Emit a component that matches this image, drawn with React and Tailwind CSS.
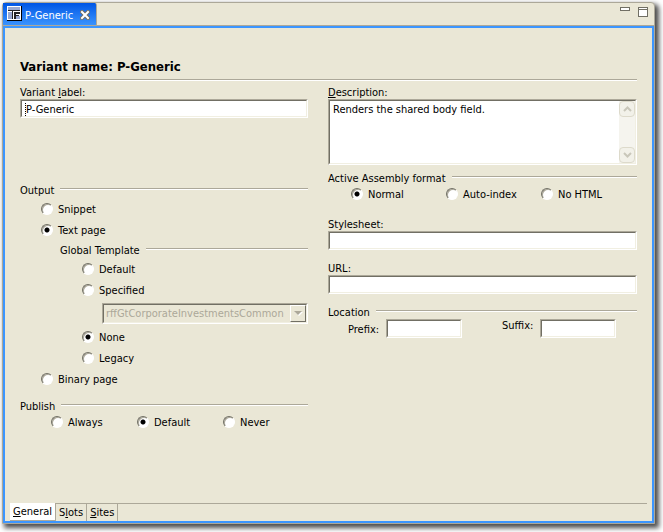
import React from "react";

const sunken =
  "border border-t-[#aca899] border-l-[#aca899] border-r-white border-b-white";
const sunkenInner =
  "border border-t-[#716f64] border-l-[#716f64] border-r-[#f1efe2] border-b-[#f1efe2]";

function Rule() {
  return <div className="h-[2px] flex-1 border-t border-b border-t-[#aca899] border-b-white" />;
}

function SectionHeader({ children }) {
  return (
    <div className="flex h-4 items-center gap-[6px]">
      <span className="pt-1">{children}</span>
      <Rule />
    </div>
  );
}

function Radio({ name, label, checked = false, className = "" }) {
  return (
    <label className={`flex items-center gap-[5px] ${className}`}>
      <input
        type="radio"
        name={name}
        defaultChecked={checked}
        className="size-3 shrink-0 appearance-none rounded-full border border-t-[#716f64] border-r-white border-b-white border-l-[#716f64] bg-white shadow-[inset_1px_1px_0_#aca899] checked:bg-[radial-gradient(circle,#000_0_2px,#fff_3px)]"
      />
      <span className="pt-[2px]">{label}</span>
    </label>
  );
}

function FieldLabel({ htmlFor, children, className = "" }) {
  return (
    <label htmlFor={htmlFor} className={`h-[15px] pt-[2px] leading-[14px] ${className}`}>
      {children}
    </label>
  );
}

function TextField({ id, defaultValue, className = "", children }) {
  return (
    <div className={`relative h-[19px] bg-white ${sunken} ${className}`}>
      <input
        id={id}
        type="text"
        defaultValue={defaultValue}
        className={`block h-full w-full bg-transparent px-1 pt-px outline-none ${sunkenInner}`}
      />
      {children}
    </div>
  );
}

function ScrollButton({ up = false }) {
  return (
    <button
      type="button"
      aria-label={up ? "Scroll up" : "Scroll down"}
      className="flex size-4 items-center justify-center rounded-sm border border-[#dddacb] bg-[#f2f1e9]"
    >
      <svg width="9" height="6" viewBox="0 0 9 6" fill="none" stroke="#c9c7ba" strokeWidth="2">
        <path d={up ? "M1 5 4.500 1.500 8 5" : "M1 1 4.500 4.500 8 1"} />
      </svg>
    </button>
  );
}

function LeftColumn() {
  return (
    <div className="flex min-w-0 flex-col">
      <FieldLabel htmlFor="variant-label">
        Variant <u>l</u>abel:
      </FieldLabel>
      <TextField id="variant-label" defaultValue="P-Generic">
        <span className="absolute top-[3px] left-[4px] h-[13px] border-l border-dotted border-black" />
      </TextField>

      <fieldset className="mt-[63px] flex min-w-0 flex-col">
        <SectionHeader>Output</SectionHeader>
        <Radio name="output" label="Snippet" className="mt-px ml-[21px] h-[21px]" />
        <Radio name="output" label="Text page" checked className="ml-[21px] h-[21px]" />
        <div className="ml-10 flex flex-col pt-px">
          <SectionHeader>Global Template</SectionHeader>
          <div className="ml-[22px] flex flex-col pt-px">
            <Radio name="template" label="Default" className="h-[21px]" />
            <Radio name="template" label="Specified" className="h-[21px]" />
            <div className={`relative mt-[3px] mb-[2px] ml-5 h-[21px] ${sunken}`}>
              <select
                disabled
                aria-label="Specified template"
                className={`block h-full w-full appearance-none bg-transparent pl-[2px] text-[#aca899] opacity-100 ${sunkenInner}`}
              >
                <option>rffGtCorporateInvestmentsCommon</option>
              </select>
              <span className="pointer-events-none absolute top-px right-px bottom-px flex w-4 items-center justify-center border border-t-white border-r-[#716f64] border-b-[#716f64] border-l-white bg-[#eae7d6]">
                <svg width="9" height="5" viewBox="0 0 9 5">
                  <path d="M1 1H9L5 5Z" fill="#fff" />
                  <path d="M0 0H8L4 4Z" fill="#aca899" />
                </svg>
              </span>
            </div>
            <Radio name="template" label="None" checked className="h-[21px]" />
            <Radio name="template" label="Legacy" className="h-[21px]" />
          </div>
        </div>
        <Radio name="output" label="Binary page" className="ml-[21px] h-[21px]" />
      </fieldset>

      <fieldset className="mt-2 flex min-w-0 flex-col">
        <SectionHeader>Publish</SectionHeader>
        <div className="mt-px ml-[31px] flex h-4">
          <Radio name="publish" label="Always" className="w-[86px]" />
          <Radio name="publish" label="Default" checked className="w-[86px]" />
          <Radio name="publish" label="Never" />
        </div>
      </fieldset>
    </div>
  );
}

function RightColumn() {
  return (
    <div className="flex min-w-0 flex-col">
      <FieldLabel htmlFor="description">
        <u>D</u>escription:
      </FieldLabel>
      <div className={`h-[66px] bg-white ${sunken}`}>
        <div className={`flex h-full ${sunkenInner}`}>
          <textarea
            id="description"
            defaultValue="Renders the shared body field."
            className="min-w-0 flex-1 resize-none overflow-hidden pt-[2px] pl-[3px] outline-none"
          />
          <div className="flex w-4 flex-col justify-between bg-[#f5f4ee]">
            <ScrollButton up />
            <ScrollButton />
          </div>
        </div>
      </div>

      <fieldset className="mt-1 flex min-w-0 flex-col">
        <SectionHeader>Active Assembly format</SectionHeader>
        <div className="mt-px ml-[23px] flex h-4">
          <Radio name="assembly" label="Normal" checked className="w-[95px]" />
          <Radio name="assembly" label="Auto-index" className="w-[95px]" />
          <Radio name="assembly" label="No HTML" />
        </div>
      </fieldset>

      <FieldLabel htmlFor="stylesheet" className="mt-[14px]">
        Stylesheet:
      </FieldLabel>
      <TextField id="stylesheet" />

      <FieldLabel htmlFor="url" className="mt-[10px]">
        URL:
      </FieldLabel>
      <TextField id="url" />

      <fieldset className="mt-[9px] flex min-w-0 flex-col">
        <SectionHeader>Location</SectionHeader>
        <div className="ml-5 flex">
          <label htmlFor="prefix" className="w-[38px] pt-1">
            Prefix:
          </label>
          <TextField id="prefix" className="w-[76px]" />
          <label htmlFor="suffix" className="ml-10 w-[38px]">
            Suffix:
          </label>
          <TextField id="suffix" className="w-[76px]" />
        </div>
      </fieldset>
    </div>
  );
}

export default function App() {
  return (
    <div className="flex min-h-screen bg-white pt-[2px] pr-2 pb-2 pl-[2px] font-['DejaVu_Sans_Condensed','DejaVu_Sans',sans-serif] text-[11px] leading-[14px] text-black">
      <div className="flex flex-1 flex-col rounded-t-sm border border-[#aca899] bg-[#eae7d6] shadow-[3px_3px_5px_1px_rgba(0,0,0,0.7)]">
        <header className="flex h-[23px] justify-between">
          <div className="flex w-[94px] items-center rounded-tr-xs border-r border-[#aca899] bg-linear-to-b from-[#0055e5] to-[#3c96ff] pl-1 text-white">
            <svg
              width="15"
              height="15"
              viewBox="0 0 15 15"
              shapeRendering="crispEdges"
              className="mb-[2px]"
            >
              <path d="M0 0H15V15H0Z" fill="#000" />
              <path d="M0 0H14V14H0Z" fill="#fff" />
              <path d="M1 1H13V4H1Z" fill="#9aa9d0" />
              <path d="M1 4H13V5H1Z" fill="#222" />
              <path d="M1 6H5V13H1Z" fill="#9aa9d0" />
              <path d="M5 5H6V13H5Z" fill="#222" />
              <path d="M8 6H13V8H9V9H12V10H9V13H7V6Z" fill="#222" />
              <path d="M9 10H13V13H9Z" fill="#9aa9d0" />
            </svg>
            <span className="ml-[3px] flex-1 pt-[2px]">P-Generic</span>
            <button type="button" aria-label="Close" className="mr-[6px]">
              <svg width="10" height="10" viewBox="0 0 10 10" strokeLinecap="square">
                <path d="M2 2 8 8M8 2 2 8" stroke="#716f64" strokeWidth="4" />
                <path d="M2 2 8 8M8 2 2 8" stroke="#fff" strokeWidth="2" />
              </svg>
            </button>
          </div>
          <div className="flex gap-2 pt-1 pr-[6px]">
            <button type="button" aria-label="Minimize" className="h-1 w-[10px] border border-[#716f64] bg-white" />
            <button
              type="button"
              aria-label="Maximize"
              className="flex h-[10px] w-[10px] items-start border border-[#716f64] bg-white"
            >
              <span className="mt-px h-px flex-1 bg-[#716f64]" />
            </button>
          </div>
        </header>

        <main className="flex flex-1 flex-col border-2 border-[#3c96ff] shadow-[0_-1px_0_#aca899]">
          <div className="flex-1 px-[15px] pt-[31px]">
            <h1 className="h-5 text-[13px] leading-4 font-bold">Variant name: P-Generic</h1>
            <div className="flex">
              <Rule />
            </div>
            <div className="mt-[3px] grid grid-cols-[288fr_309fr] gap-5">
              <LeftColumn />
              <RightColumn />
            </div>
          </div>
          <nav className="mx-[5px] flex h-[18px]">
            <button type="button" className="border-r border-b border-[#aca899] bg-white px-[3px]">
              <u>G</u>eneral
            </button>
            <button type="button" className="border-t border-r border-[#aca899] px-[3px]">
              S<u>l</u>ots
            </button>
            <button type="button" className="border-t border-r border-[#aca899] px-[3px]">
              <u>S</u>ites
            </button>
            <span className="flex-1 border-t border-[#aca899]" />
          </nav>
        </main>
      </div>
    </div>
  );
}
